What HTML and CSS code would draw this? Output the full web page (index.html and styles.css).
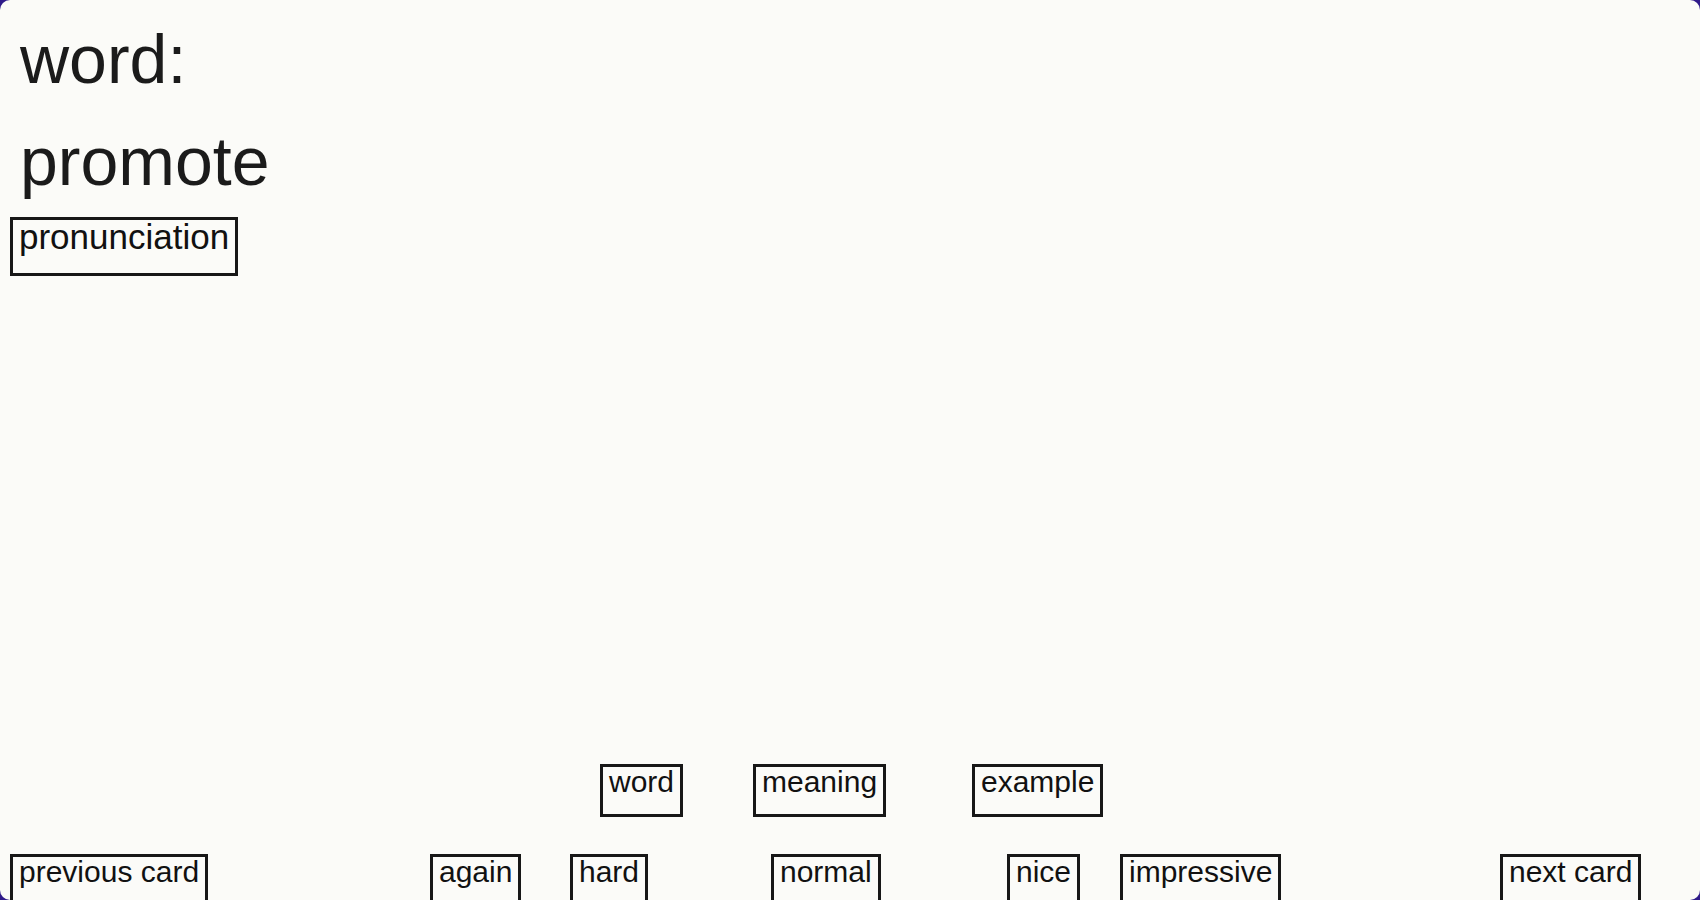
FILE: index.html
```html
<!DOCTYPE html>
<html lang="en">
<head>
<meta charset="utf-8">
<title>Flashcard</title>
<link rel="stylesheet" href="styles.css">
</head>
<body>
<main class="card">
  <div class="heading">word:</div>
  <div class="heading">promote</div>
  <div class="pron-row">
    <button class="btn btn-pron">pronunciation</button>
  </div>
  <div class="reveal-row">
    <button class="btn">word</button>
    <button class="btn">meaning</button>
    <button class="btn">example</button>
  </div>
  <div class="nav-row">
    <button class="btn">previous card</button>
    <button class="btn">again</button>
    <button class="btn">hard</button>
    <button class="btn">normal</button>
    <button class="btn">nice</button>
    <button class="btn">impressive</button>
    <button class="btn">next card</button>
  </div>
</main>
</body>
</html>
```

FILE: styles.css
```css
html, body {
  margin: 0;
  padding: 0;
  height: 100%;
  overflow: hidden;
  background: #2f1a8a;
}

.card {
  box-sizing: border-box;
  height: 900px;
  background: #fbfbf8;
  border-radius: 10px;
  padding: 8px 0 0 0;
  color: #1b1b1b;
  font-family: "Liberation Sans", Arial, sans-serif;
  display: flex;
  flex-direction: column;
}

.heading {
  font-size: 68px;
  line-height: 102px;
  padding-left: 20px;
  white-space: nowrap;
}

.btn {
  font-family: "Liberation Sans", Arial, sans-serif;
  font-size: 30px;
  line-height: 29px;
  color: #111;
  background: transparent;
  border: 3px solid #171717;
  border-radius: 0;
  margin: 0;
  padding: 0 6px 18px 6px;
  text-align: left;
  white-space: nowrap;
}

.pron-row {
  display: flex;
  padding-left: 10px;
  margin-top: 5px;
}

.btn-pron {
  font-size: 35px;
  line-height: 34px;
  padding: 0 6px 19px 6px;
}

.reveal-row {
  display: grid;
  grid-template-columns: 153px 219px auto;
  justify-items: start;
  padding-left: 600px;
  margin-top: 488px;
}

.nav-row {
  display: grid;
  grid-template-columns: 420px 140px 201px 236px 113px 380px auto;
  justify-items: start;
  padding-left: 10px;
  margin-top: 37px;
}
```
